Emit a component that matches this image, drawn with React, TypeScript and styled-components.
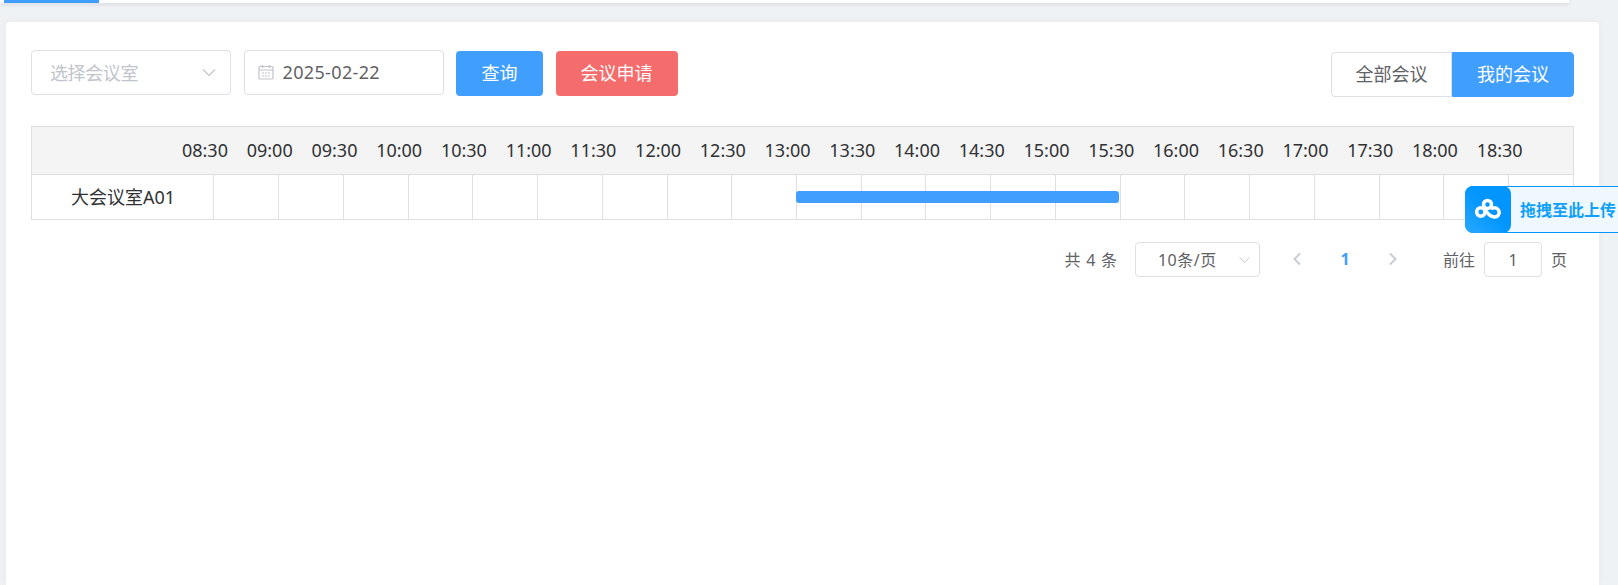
import React from 'react'
import styled, { createGlobalStyle } from 'styled-components'

const TIMES = [
  '08:30', '09:00', '09:30', '10:00', '10:30', '11:00', '11:30', '12:00', '12:30', '13:00', '13:30',
  '14:00', '14:30', '15:00', '15:30', '16:00', '16:30', '17:00', '17:30', '18:00', '18:30',
]

const GlobalStyle = createGlobalStyle`
  html, body {
    margin: 0;
    padding: 0;
    height: 100%;
    overflow: hidden;
    background: #eff2f4;
    font-family: "Noto Sans", "Noto Sans CJK SC", sans-serif;
  }
  * {
    box-sizing: border-box;
  }
`

const Page = styled.div`
  position: relative;
  height: 585px;
  overflow: hidden;
  display: flex;
  flex-direction: column;
`

const TopBar = styled.div`
  position: relative;
  z-index: 1;
  height: 3px;
  flex: none;
  margin-right: 49px;
  background: #fff;
  box-shadow: 0 1px 4px rgba(0, 21, 41, 0.14);
`

const ActiveTab = styled.div`
  width: 95px;
  height: 3px;
  margin-left: 4px;
  background: #409eff;
`

const Content = styled.div`
  flex: 1;
  padding: 19px 19px 0 6px;
`

const Card = styled.div`
  height: 100%;
  background: #fff;
  border-radius: 4px 4px 0 0;
  padding: 28px 25px;
  box-shadow: 0 0 10px rgba(0, 0, 0, 0.04);
`

const Toolbar = styled.div`
  display: flex;
  align-items: flex-start;
  justify-content: space-between;
  height: 48px;
  margin-bottom: 28px;
`

const Filters = styled.div`
  display: flex;
  gap: 12.5px;
`

const Field = styled.div`
  width: 200px;
  height: 45px;
  border: 1px solid #dcdfe6;
  border-radius: 4px;
  display: flex;
  align-items: center;
  font-size: 18px;
  padding-bottom: 2px;
  color: #606266;
`

const SelectField = styled(Field)`
  justify-content: space-between;
  padding-left: 18px;
  padding-right: 13px;
  color: #c0c4cc;
  letter-spacing: -0.4px;
`

const DateField = styled(Field)`
  padding-left: 13px;
  gap: 9px;
  letter-spacing: 0.35px;
`

const Button = styled.button<{ $tone: string; $w: number }>`
  width: ${(p) => p.$w}px;
  height: 45px;
  margin-top: 1px;
  border: 0;
  border-radius: 4px;
  background: ${(p) => p.$tone};
  color: #fff;
  font: inherit;
  font-size: 18px;
  padding: 0 0 3px;
`

const Toggle = styled.div`
  display: flex;
  margin-top: 2px;
`

const ToggleItem = styled.div<{ $active?: boolean }>`
  width: ${(p) => (p.$active ? 122 : 121)}px;
  height: 45px;
  display: flex;
  align-items: center;
  justify-content: center;
  padding-bottom: 3px;
  font-size: 18px;
  color: ${(p) => (p.$active ? '#fff' : '#606266')};
  background: ${(p) => (p.$active ? '#409eff' : '#fff')};
  border: 1px solid ${(p) => (p.$active ? '#409eff' : '#dcdfe6')};
  border-radius: ${(p) => (p.$active ? '0 4px 4px 0' : '4px 0 0 4px')};
`

const Schedule = styled.div`
  border: 1px solid #dfdfdf;
  color: #303133;
  font-size: 18px;
`

const HeaderRow = styled.div`
  height: 48px;
  background: #f4f4f5;
  border-bottom: 1px solid #dfdfdf;
  display: grid;
  grid-template-columns: repeat(21, 64.74px);
  padding-left: 140.6px;
  padding-bottom: 1px;
  align-items: center;
`

const TimeLabel = styled.div`
  text-align: center;
`

const BodyRow = styled.div`
  position: relative;
  height: 44px;
  display: grid;
  grid-template-columns: 181.4px repeat(21, 64.74px);
`

const RoomName = styled.div`
  display: flex;
  align-items: center;
  padding-left: 39px;
  padding-bottom: 3px;
`

const Slot = styled.div`
  border-left: 1px solid #dfdfdf;
`

const Booking = styled.div`
  position: absolute;
  left: 764px;
  top: 16px;
  width: 323px;
  height: 12px;
  background: #409eff;
  border-radius: 3px;
`

const Pager = styled.div`
  display: flex;
  align-items: center;
  justify-content: flex-end;
  margin-top: 21px;
  padding-right: 7px;
  font-size: 16px;
  color: #606266;
`

const Total = styled.span`
  margin-right: 18px;
  word-spacing: 1.5px;
`

const SizeSelect = styled.div`
  width: 125px;
  height: 35px;
  border: 1px solid #dcdfe6;
  border-radius: 4px;
  display: flex;
  align-items: center;
  justify-content: space-between;
  padding: 0 8px 0 22px;
  margin-right: 19px;
  letter-spacing: 0.5px;
`

const PagerArrow = styled.span`
  display: flex;
  width: 36px;
  justify-content: center;
`

const PageNum = styled.span`
  width: 60px;
  text-align: center;
  color: #409eff;
  font-weight: 700;
`

const JumpLabel = styled.span`
  margin-left: 32px;
`

const JumpInput = styled.div`
  width: 58px;
  height: 35px;
  margin: 1px 9px 0 9px;
  border: 1px solid #dcdfe6;
  border-radius: 4px;
  display: flex;
  align-items: center;
  justify-content: center;
`

const UploadWidget = styled.div`
  position: absolute;
  left: 1465px;
  top: 186px;
  width: 160px;
  height: 47px;
  display: flex;
  align-items: center;
  background: #eff8ff;
  border: 1px solid #0095ff;
  border-radius: 8px 0 0 8px;
`

const UploadIcon = styled.div`
  width: 46px;
  height: 47px;
  margin: -1px 0 -1px -1px;
  padding-bottom: 2px;
  flex: none;
  display: flex;
  align-items: center;
  justify-content: center;
  border-radius: 8px;
  background: linear-gradient(45deg, #2aa8ff, #0095ff 55%);
`

const UploadText = styled.span`
  margin-left: 9px;
  padding-bottom: 2px;
  font-size: 16px;
  font-weight: 700;
  color: #0ea0fb;
  white-space: nowrap;
`

const Chevron = ({ size, color }: { size: number; color: string }) => (
  <svg width={size} height={size} viewBox="0 0 16 16" fill="none" stroke={color} strokeWidth="1.2">
    <path d="M2 5.5 8 11.5 14 5.5" />
  </svg>
)

const Calendar = () => (
  <svg width="16" height="16" viewBox="0 0 16 16" fill="none" stroke="#c0c4cc" strokeWidth="1.2">
    <rect x="1" y="2.5" width="14" height="12.5" rx="1" />
    <path d="M1 6h14M4.500 1v3M11.500 1v3M4 9h2M7 9h2M10 9h2M4 12h2M7 12h2M10 12h2" />
  </svg>
)

const PagerChevron = ({ left }: { left?: boolean }) => (
  <svg width="12" height="14" viewBox="0 0 12 14" fill="none" stroke="#c8ccd3" strokeWidth="2">
    <path d={left ? 'M9 1.5 3.5 7 9 12.5' : 'M3 1.5 8.5 7 3 12.5'} />
  </svg>
)

const CloudLogo = () => (
  <svg width="27" height="20" viewBox="0 0 27 20" fill="none" stroke="#fff" strokeWidth="3.5" overflow="visible">
    <circle cx="12.500" cy="5.400" r="4" />
    <circle cx="5.800" cy="13" r="4.200" />
    <path d="M9.500 10.500C12 13 14 17.800 19.500 18a4.600 4.600 0 1 0 -2-8.700L15 8" />
  </svg>
)

export default function App() {
  return (
    <>
      <GlobalStyle />
      <Page>
        <TopBar>
          <ActiveTab />
        </TopBar>
        <Content>
          <Card>
            <Toolbar>
              <Filters>
                <SelectField>
                  选择会议室
                  <Chevron size={16} color="#c0c4cc" />
                </SelectField>
                <DateField>
                  <Calendar />
                  2025-02-22
                </DateField>
                <Button $tone="#409eff" $w={87}>查询</Button>
                <Button $tone="#f56c6c" $w={122}>会议申请</Button>
              </Filters>
              <Toggle>
                <ToggleItem>全部会议</ToggleItem>
                <ToggleItem $active>我的会议</ToggleItem>
              </Toggle>
            </Toolbar>
            <Schedule>
              <HeaderRow>
                {TIMES.map((t) => (
                  <TimeLabel key={t}>{t}</TimeLabel>
                ))}
              </HeaderRow>
              <BodyRow>
                <RoomName>大会议室A01</RoomName>
                {TIMES.map((t) => (
                  <Slot key={t} />
                ))}
                <Booking />
              </BodyRow>
            </Schedule>
            <Pager>
              <Total>共 4 条</Total>
              <SizeSelect>
                10条/页
                <Chevron size={13} color="#c0c4cc" />
              </SizeSelect>
              <PagerArrow>
                <PagerChevron left />
              </PagerArrow>
              <PageNum>1</PageNum>
              <PagerArrow>
                <PagerChevron />
              </PagerArrow>
              <JumpLabel>前往</JumpLabel>
              <JumpInput>1</JumpInput>
              页
            </Pager>
          </Card>
        </Content>
        <UploadWidget>
          <UploadIcon>
            <CloudLogo />
          </UploadIcon>
          <UploadText>拖拽至此上传</UploadText>
        </UploadWidget>
      </Page>
    </>
  )
}
